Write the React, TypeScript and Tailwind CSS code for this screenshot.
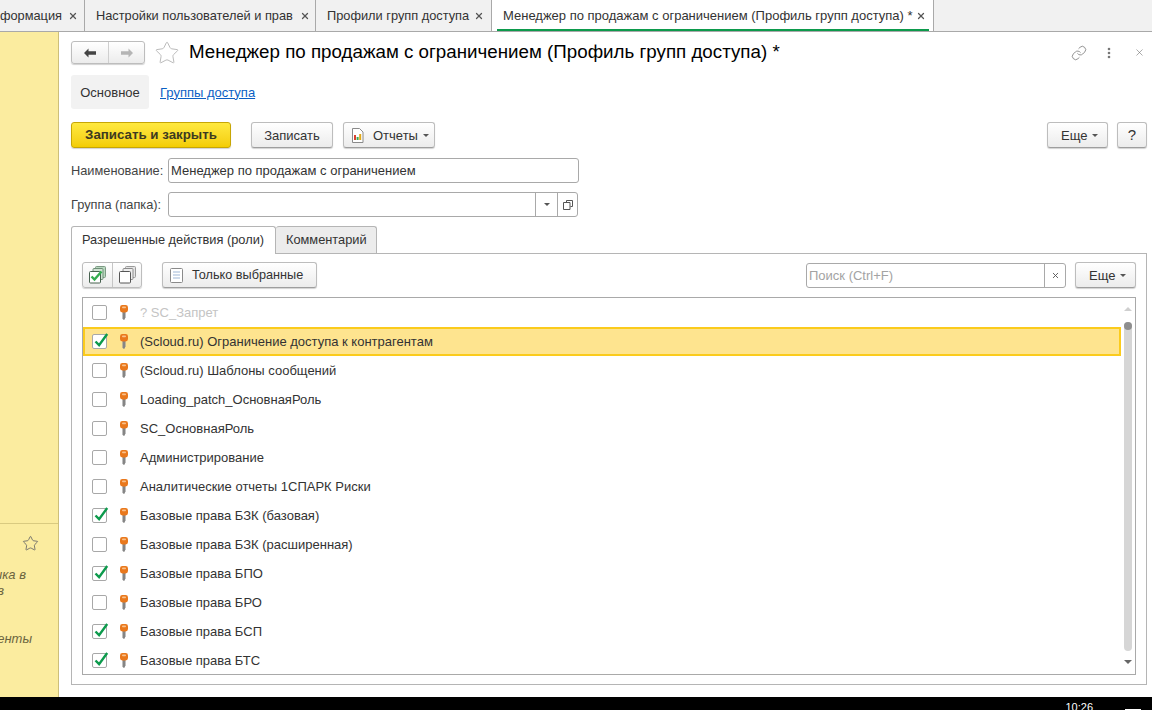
import { Link as LinkIcon, Star, X } from 'lucide-react';
import type { ReactNode } from 'react';

const roles = [
  { name: '? SC_Запрет', checked: false, muted: true },
  { name: '(Scloud.ru) Ограничение доступа к контрагентам', checked: true, active: true },
  { name: '(Scloud.ru) Шаблоны сообщений', checked: false },
  { name: 'Loading_patch_ОсновнаяРоль', checked: false },
  { name: 'SC_ОсновнаяРоль', checked: false },
  { name: 'Администрирование', checked: false },
  { name: 'Аналитические отчеты 1СПАРК Риски', checked: false },
  { name: 'Базовые права БЗК (базовая)', checked: true },
  { name: 'Базовые права БЗК (расширенная)', checked: false },
  { name: 'Базовые права БПО', checked: true },
  { name: 'Базовые права БРО', checked: false },
  { name: 'Базовые права БСП', checked: true },
  { name: 'Базовые права БТС', checked: true },
];

const Caret = () => (
  <span className="inline-block shrink-0 ml-[5px] w-0 h-0 border-x-[3px] border-x-transparent border-t-[3px] border-t-[#555]" />
);

const KeyIcon = () => (
  <svg width="10" height="15" viewBox="0 0 10 15" className="shrink-0 ml-[1px]">
    <path d="M3.4 7h3.2v5.6L5 15l-1.6-1.2z" fill="#949494" />
    <path d="M5 7v7.5" stroke="#6f6f6f" strokeWidth="0.8" />
    <rect x="1" y="0" width="8" height="7.5" rx="2.4" fill="#e9781c" />
    <rect x="3" y="1.6" width="4" height="1.6" rx="0.8" fill="#f9c08a" />
  </svg>
);

const Checkbox = ({ checked }: { checked: boolean }) => (
  <span className="relative block w-[15px] h-[15px] shrink-0 bg-white border border-[#a8a8a8] rounded-[2px]">
    {checked && (
      <svg width="18" height="18" viewBox="0 0 18 18" className="absolute left-[0px] top-[-4px]">
        <path d="M2.5 10.5l3.6 3.6L14.2 3" fill="none" stroke="#0c9a4c" strokeWidth="2.4" />
      </svg>
    )}
  </span>
);

const Btn = ({ className = '', children }: { className?: string; children: ReactNode }) => (
  <div
    className={`flex items-center h-[26px] border border-[#bdbdbd] border-b-[#9e9e9e] rounded-[3px] bg-gradient-to-b from-white to-[#ececec] shadow-[0_1px_1px_rgba(0,0,0,0.18)] text-[#333] ${className}`}
  >
    {children}
  </div>
);

const Tab = ({ children, className = '' }: { children: ReactNode; className?: string }) => (
  <div className={`flex items-center shrink-0 h-[31px] border-r border-[#a9a9a9] whitespace-nowrap ${className}`}>
    {children}
  </div>
);

const TabClose = () => <X size={10} strokeWidth={3} className="text-[#555] shrink-0" />;

const StackIcon = ({ checked }: { checked?: boolean }) => (
  <svg width="19" height="19" viewBox="0 0 19 19">
    <rect x="7.5" y="0.5" width="10" height="11" rx="1" fill={checked ? '#b9d8bf' : '#e4e4e4'} stroke={checked ? '#7d9a84' : '#9a9a9a'} />
    <rect x="5" y="2.5" width="10" height="11" rx="1" fill={checked ? '#cfe3d2' : '#eeeeee'} stroke={checked ? '#6f8f78' : '#8c8c8c'} />
    <rect x="1.5" y="5.5" width="11" height="11.5" rx="1" fill="#fff" stroke={checked ? '#47614f' : '#555'} />
    {checked && <path d="M3.5 10.5l3 3 7-8" fill="none" stroke="#35ad50" strokeWidth="2.4" />}
  </svg>
);

export default function App() {
  return (
    <div className="w-[1152px] h-[710px] overflow-hidden bg-white text-[13px] text-[#333] font-['Liberation_Sans',Arial,sans-serif]">
      {/* open windows */}
      <div className="flex h-[32px] bg-[#f1f1f1] border-b border-[#a9a9a9] overflow-hidden text-[12.8px]">
        <Tab className="w-[85px] justify-end gap-[6px] pr-[6px]">
          <span>информация</span>
          <TabClose />
        </Tab>
        <Tab className="w-[231px] pl-[11px] pr-[5px] justify-between">
          <span>Настройки пользователей и прав</span>
          <TabClose />
        </Tab>
        <Tab className="w-[176px] pl-[11px] pr-[7px] justify-between">
          <span>Профили групп доступа</span>
          <TabClose />
        </Tab>
        <Tab className="w-[442px] bg-white pl-[5px] pr-[4px]">
          <div className="flex items-center justify-between w-full h-full border-b-2 border-[#0c9a4c] pl-[6px] pr-[3px] pt-[2px] text-[13px]">
            <span>Менеджер по продажам с ограничением (Профиль групп доступа) *</span>
            <TabClose />
          </div>
        </Tab>
      </div>

      <div className="flex h-[665px]">
        {/* side panel */}
        <div className="w-[59px] shrink-0 overflow-hidden bg-[#fbec9f] border-r border-[#cdbf7a]">
          <div className="h-[492px] border-b border-[#d9ca80]" />
          <div className="flex justify-end pt-[11px] pr-[19px]">
            <Star size={17} strokeWidth={1.2} className="text-[#666]" />
          </div>
          <div className="mt-[15px] italic text-[#6b6540] leading-[16px]">
            <div className="flex justify-end w-[26px] whitespace-nowrap">ника в</div>
            <div className="flex justify-end w-[4px] whitespace-nowrap">в</div>
            <div className="flex justify-end w-[32px] whitespace-nowrap mt-[32px]">менты</div>
          </div>
        </div>

        {/* form */}
        <div className="flex-1 min-w-0 pl-[12px] pr-[5px] pt-[9px]">
          <div className="flex items-center h-[23px]">
            <div className="flex w-[74px] h-[23px] border border-[#bdbdbd] rounded-[3px] bg-gradient-to-b from-white to-[#ececec] shadow-[0_1px_1px_rgba(0,0,0,0.18)]">
              <div className="flex items-center justify-center w-[37px] border-r border-[#cfcfcf]">
                <svg width="14" height="10" viewBox="0 0 14 10">
                  <path d="M5.5 0.5L1 5l4.5 4.5V6.8H13V3.2H5.5z" fill="#444" />
                </svg>
              </div>
              <div className="flex items-center justify-center flex-1">
                <svg width="14" height="10" viewBox="0 0 14 10">
                  <path d="M8.5 0.5L13 5 8.5 9.5V6.8H1V3.2h7.5z" fill="#b5b5b5" />
                </svg>
              </div>
            </div>
            <Star size={26} strokeWidth={0.9} className="text-[#b9b9b9] ml-[9px]" />
            <h1 className="ml-[9px] pb-[2px] text-[18.75px] leading-[21px] text-black whitespace-nowrap">
              Менеджер по продажам с ограничением (Профиль групп доступа) *
            </h1>
            <div className="ml-auto flex items-center">
              <LinkIcon size={16} strokeWidth={1.2} className="text-[#777]" />
              <svg width="4" height="12" viewBox="0 0 4 12" className="ml-[20px]">
                <circle cx="2" cy="2" r="1.3" fill="#777" />
                <circle cx="2" cy="6" r="1.3" fill="#777" />
                <circle cx="2" cy="10" r="1.3" fill="#777" />
              </svg>
              <X size={11} strokeWidth={1.2} className="text-[#666] ml-[23px] mr-[2px]" />
            </div>
          </div>

          <div className="flex items-center h-[34px] mt-[11px] pt-0">
            <div className="flex items-center justify-center w-[78px] h-full pt-[1px] bg-[#f2f2f2] rounded-[3px]">Основное</div>
            <span className="ml-[11px] pt-[1px] text-[#0b5fc4] underline">Группы доступа</span>
          </div>

          <div className="flex items-center mt-[13px]">
            <div className="flex items-center justify-center w-[160px] h-[26px] border border-[#c7a605] rounded-[3px] bg-gradient-to-b from-[#ffe93d] to-[#f3cd00] shadow-[0_1px_1px_rgba(0,0,0,0.18)] font-bold text-[13.3px] text-[#3d3a20]">
              Записать и закрыть
            </div>
            <Btn className="w-[82px] ml-[20px] justify-center pt-[1px]">Записать</Btn>
            <Btn className="w-[92px] ml-[10px] pl-[7px]">
              <svg width="13" height="15" viewBox="0 0 13 15" className="shrink-0">
                <path d="M1.5.5h7l3.5 3.5v10.5H1.5z" fill="#fff" stroke="#8a8a8a" />
                <path d="M4 7v5" stroke="#d9402e" strokeWidth="2" />
                <path d="M6.6 9v3" stroke="#3aa655" strokeWidth="2" />
                <path d="M9.2 6v6" stroke="#e0a91c" strokeWidth="2" />
              </svg>
              <span className="ml-[9px] pt-[1px]">Отчеты</span>
              <Caret />
            </Btn>
            <Btn className="w-[61px] ml-auto pl-[13px]">
              <span className="pt-[1px]">Еще</span>
              <Caret />
            </Btn>
            <Btn className="w-[30px] ml-[9px] justify-center text-[15px] text-[#222]">?</Btn>
          </div>

          <div className="flex items-center mt-[10px] text-[12.8px]">
            <span className="w-[97px] text-[#444]">Наименование:</span>
            <div className="flex items-center w-[411px] h-[25px] px-[2px] border border-[#a9a9a9] rounded-[3px] text-[13px]">
              Менеджер по продажам с ограничением
            </div>
          </div>

          <div className="flex items-center mt-[9px] text-[12.8px]">
            <span className="w-[97px] text-[#444]">Группа (папка):</span>
            <div className="flex justify-end w-[410px] h-[25px] border border-[#a9a9a9] rounded-[3px]">
              <div className="flex items-center justify-center w-[22px] border-l border-[#a9a9a9]">
                <span className="w-0 h-0 border-x-[3px] border-x-transparent border-t-[3px] border-t-[#555]" />
              </div>
              <div className="flex items-center justify-center w-[20px] border-l border-[#a9a9a9]">
                <svg width="10" height="10" viewBox="0 0 10 10">
                  <path d="M3.5 2.5v-2h6v6h-2M.5 2.5h6.5v7H.5z" fill="none" stroke="#555" />
                </svg>
              </div>
            </div>
          </div>

          {/* page tabs */}
          <div className="flex items-end h-[27px] mt-[9px] text-[12.8px]">
            <div className="flex items-center w-[205px] h-[28px] -mb-[1px] pl-[10px] pb-[1px] bg-white border border-b-0 border-[#b5b5b5] rounded-t-[3px] relative">
              Разрешенные действия (роли)
            </div>
            <div className="flex items-center w-[101px] h-[27px] pl-[10px] bg-[#ececec] border border-l-0 border-b-0 border-[#b5b5b5] rounded-t-[3px]">
              Комментарий
            </div>
          </div>

          <div className="border border-[#b5b5b5] px-[10px] pt-[8px] pb-[9px]">
            <div className="flex items-center">
              <div className="flex w-[60px] h-[26px] border border-[#bdbdbd] rounded-[3px] bg-gradient-to-b from-white to-[#ececec] shadow-[0_1px_1px_rgba(0,0,0,0.18)]">
                <div className="flex items-center justify-center w-[30px] border-r border-[#c5c5c5]">
                  <StackIcon checked />
                </div>
                <div className="flex items-center justify-center flex-1">
                  <StackIcon />
                </div>
              </div>
              <Btn className="w-[155px] ml-[20px] pl-[7px]">
                <svg width="13" height="15" viewBox="0 0 13 15" className="shrink-0">
                  <rect x="0.5" y="0.5" width="12" height="14" rx="1" fill="#fff" stroke="#8a8a8a" />
                  <path d="M3 4h7M3 7h7M3 10h7" stroke="#9fb7d6" />
                </svg>
                <span className="ml-[9px] pt-[1px] text-[12.7px]">Только выбранные</span>
              </Btn>
              <div className="flex ml-auto w-[260px] h-[25px] border border-[#a9a9a9] rounded-[3px]">
                <div className="flex items-center flex-1 pl-[2px] pt-[1px] text-[#a3a3a3]">Поиск (Ctrl+F)</div>
                <div className="flex items-center justify-center w-[21px] border-l border-[#a9a9a9]">
                  <X size={9} strokeWidth={2.4} className="text-[#555]" />
                </div>
              </div>
              <Btn className="w-[61px] ml-[9px] pl-[13px]">
                <span className="pt-[1px]">Еще</span>
                <Caret />
              </Btn>
            </div>

            <div className="flex h-[378px] mt-[9px] border border-[#a9a9a9] overflow-hidden">
              <div className="flex-1 min-w-0">
                {roles.map((role) => (
                  <div
                    key={role.name}
                    className={`flex items-center h-[29px] pl-[7px] gap-[11px] border-2 ${
                      role.active ? 'bg-[#fee48f] border-[#fbcb1c]' : 'border-transparent'
                    }`}
                  >
                    <Checkbox checked={role.checked} />
                    <KeyIcon />
                    <span className={`whitespace-nowrap ${role.muted ? 'text-[#c4c4c4]' : ''}`}>{role.name}</span>
                  </div>
                ))}
              </div>
              <div className="flex flex-col items-center w-[14px] shrink-0 pt-[9px]">
                <svg width="8" height="4" viewBox="0 0 8 4" className="shrink-0">
                  <path d="M4 0l4 4H0z" fill="#cfcfcf" />
                </svg>
                <div className="w-[8px] h-[329px] mt-[11px] bg-[#d6d6d6] rounded-[4px]">
                  <div className="w-[8px] h-[8px] bg-[#8e8e8e] rounded-full" />
                </div>
                <svg width="8" height="4" viewBox="0 0 8 4" className="mt-[9px] shrink-0">
                  <path d="M0 0h8L4 4z" fill="#666" />
                </svg>
              </div>
            </div>
          </div>
        </div>
      </div>

      {/* taskbar */}
      <div className="flex justify-end items-start h-[13px] bg-black overflow-hidden">
        <span className="mt-[4px] mr-[32px] text-[11px] leading-[13px] text-white">10:26</span>
        <span className="mt-[12px] mr-[11px] w-[16px] h-[1px] bg-white" />
      </div>
    </div>
  );
}
